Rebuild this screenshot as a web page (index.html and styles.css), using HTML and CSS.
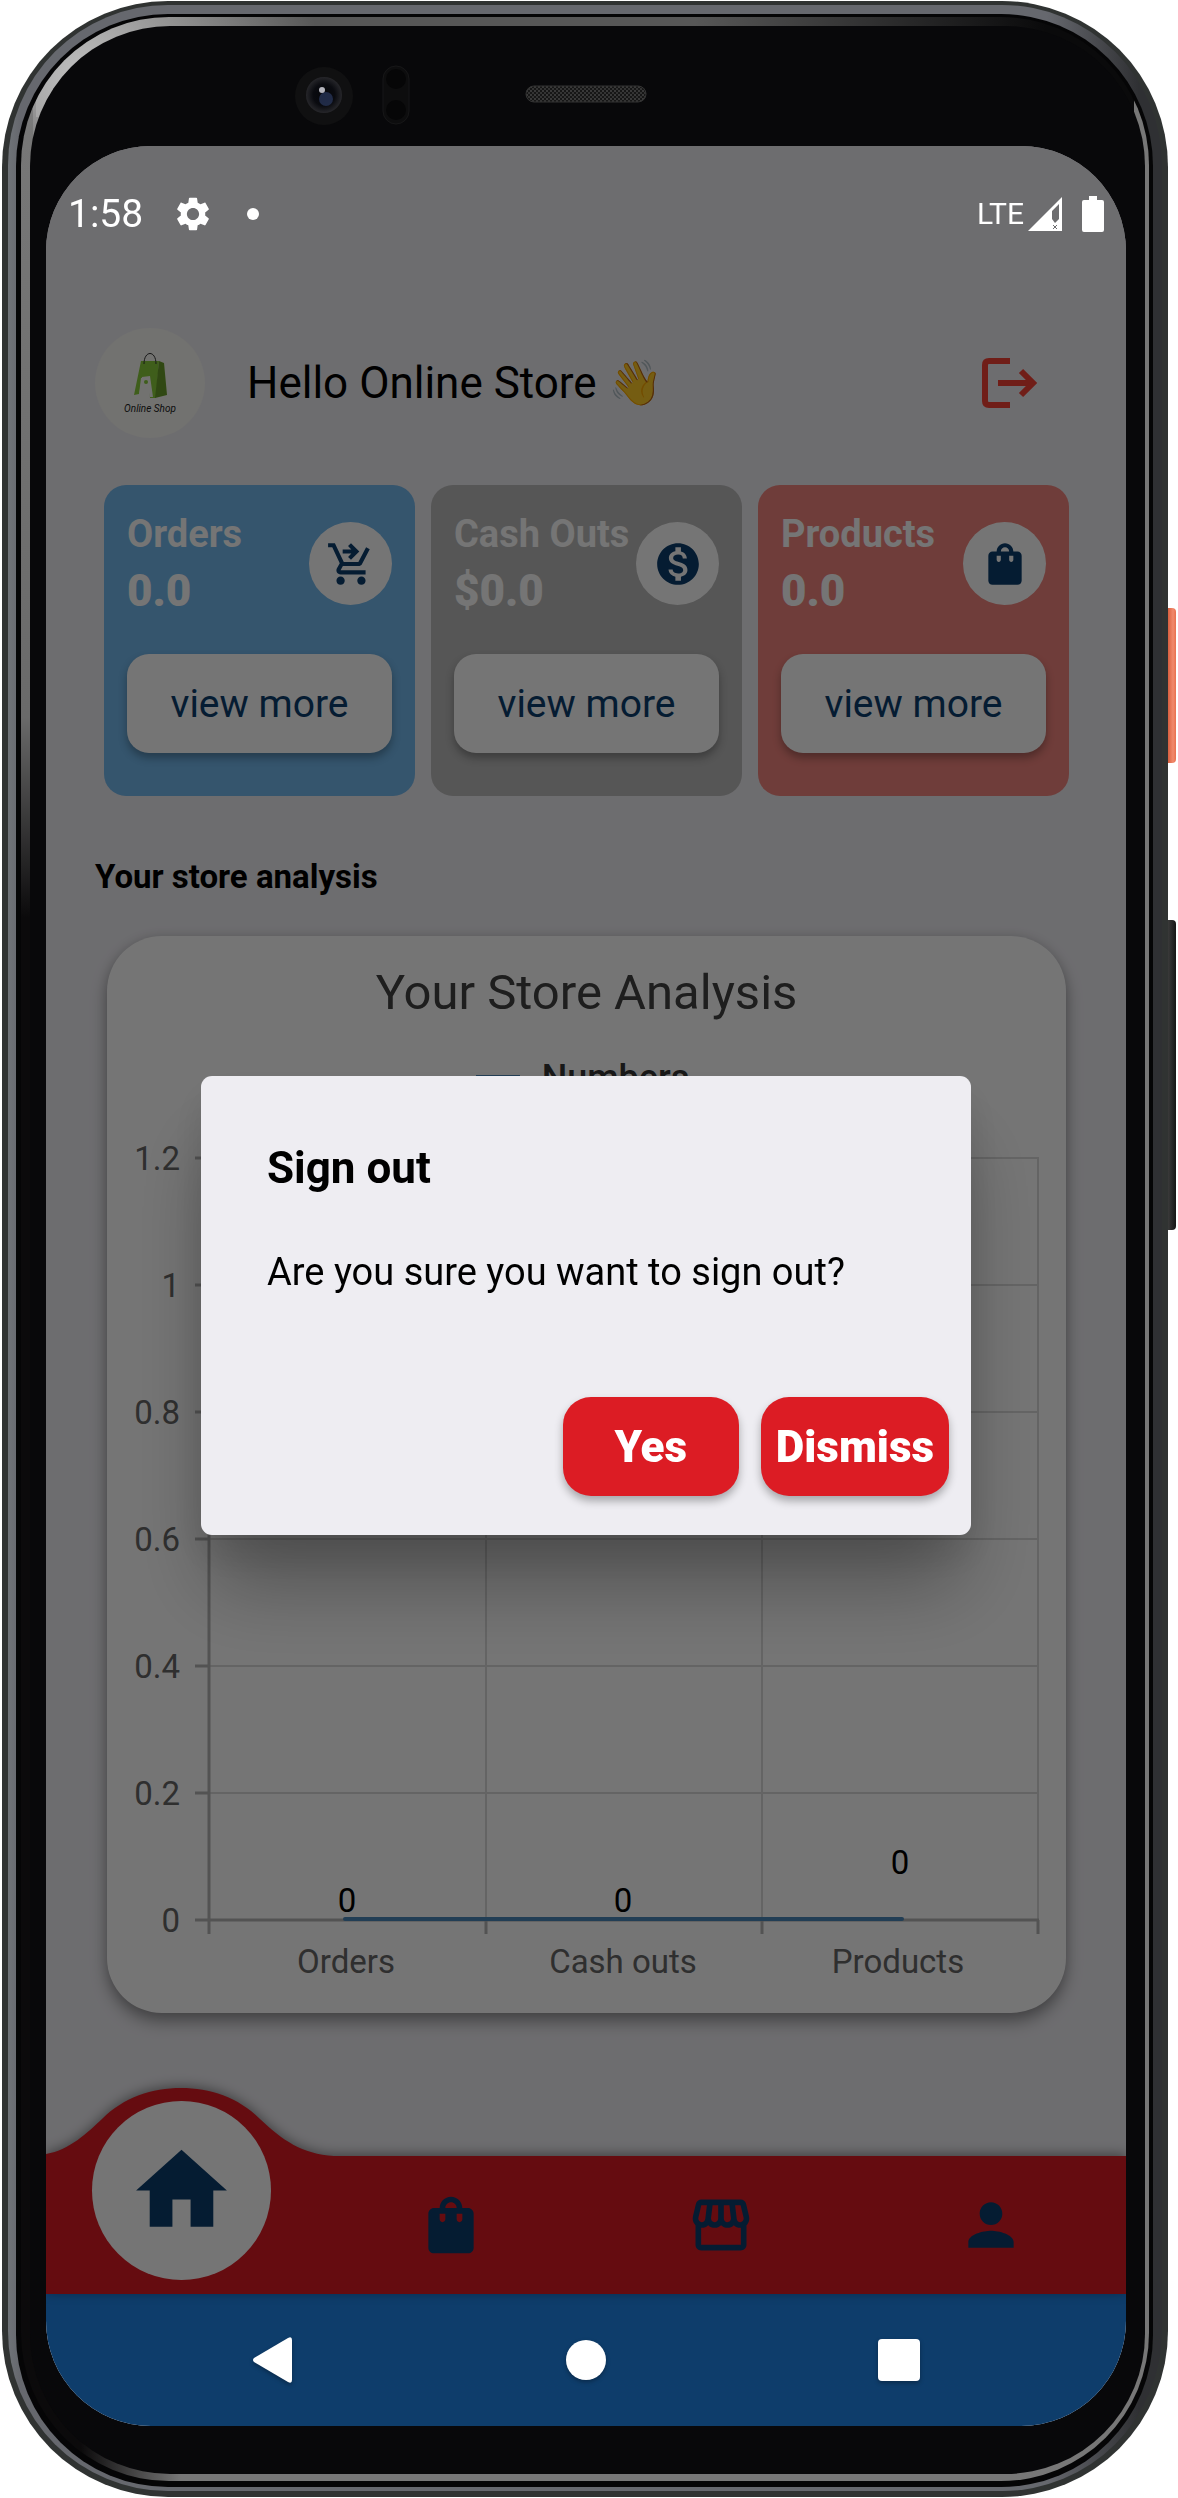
FILE: index.html
```html
<!DOCTYPE html>
<html lang="en">
<head>
<meta charset="utf-8">
<meta name="viewport" content="width=device-width, initial-scale=1">
<title>Online Store</title>
<link rel="stylesheet" href="styles.css">
</head>
<body>
<div class="phone">
  <span class="side-key side-key-power"></span>
  <span class="side-key side-key-volume"></span>
  <div class="rim"><div class="groove"><div class="bevel"><div class="face">
    <svg class="sensors" viewBox="0 0 360 70" aria-hidden="true">
      <defs>
        <radialGradient id="lens"><stop offset="0" stop-color="#05060a"/><stop offset=".6" stop-color="#0a0b10"/><stop offset="1" stop-color="#26262a"/></radialGradient>
        <pattern id="mesh" width="4" height="4" patternUnits="userSpaceOnUse"><rect width="4" height="4" fill="#161616"/><circle cx="1" cy="1" r="1" fill="#444"/><circle cx="3" cy="3" r="1" fill="#3c3c3c"/></pattern>
      </defs>
      <circle cx="34" cy="34" r="29" fill="#101011"/>
      <circle cx="34" cy="33" r="18" fill="url(#lens)"/>
      <circle cx="36" cy="37" r="7" fill="#2b3960" opacity=".7"/>
      <circle cx="32" cy="28" r="3" fill="#b5b5bd"/>
      <rect x="93" y="4" width="26" height="58" rx="13" fill="#0d0d0e" stroke="#171718"/>
      <circle cx="106" cy="17" r="10" fill="#060607"/>
      <circle cx="106" cy="48" r="10" fill="#060607"/>
      <rect x="236" y="24" width="120" height="16" rx="8" fill="url(#mesh)" stroke="#333"/>
    </svg>

    <div class="screen">
      <div class="app">
        <div class="status-bar">
          <span class="clock">1:58</span>
          <svg class="gear" viewBox="2 2 20 20" aria-hidden="true"><path fill="currentColor" d="M19.14 12.94c.04-.3.06-.61.06-.94 0-.32-.02-.64-.07-.94l2.03-1.58c.18-.14.23-.41.12-.61l-1.92-3.32c-.12-.22-.37-.29-.59-.22l-2.39.96c-.5-.38-1.03-.7-1.62-.94l-.36-2.54c-.04-.24-.24-.41-.48-.41h-3.84c-.24 0-.43.17-.47.41l-.36 2.54c-.59.24-1.13.57-1.62.94l-2.39-.96c-.22-.08-.47 0-.59.22L2.74 8.87c-.12.21-.08.47.12.61l2.03 1.58c-.05.3-.09.63-.09.94s.02.64.07.94l-2.03 1.58c-.18.14-.23.41-.12.61l1.92 3.32c.12.22.37.29.59.22l2.39-.96c.5.38 1.03.7 1.62.94l.36 2.54c.05.24.24.41.48.41h3.84c.24 0 .44-.17.47-.41l.36-2.54c.59-.24 1.13-.56 1.62-.94l2.39.96c.22.08.47 0 .59-.22l1.92-3.32c.12-.22.07-.47-.12-.61l-2.01-1.58zM12 15.6c-1.98 0-3.6-1.62-3.6-3.6s1.62-3.6 3.6-3.6 3.6 1.62 3.6 3.6-1.62 3.6-3.6 3.6z"/></svg>
          <span class="dot"></span>
          <span class="network">LTE</span>
          <svg class="signal" viewBox="0 0 34 34" aria-hidden="true"><path fill="currentColor" fill-rule="evenodd" d="M34 0V34H0ZM31 7L24 14V22L27 26L31 22Z"/><path d="M25 28l4 4m0-4l-4 4" stroke="#6d6d6f"/></svg>
          <svg class="battery" viewBox="0 0 22 36" aria-hidden="true"><path fill="currentColor" d="M7 0h8v4h5q2 0 2 2v28q0 2-2 2H2q-2 0-2-2V6q0-2 2-2h5z"/></svg>
        </div>

        <main class="page">
          <header class="greeting">
            <svg class="avatar" viewBox="0 0 110 110" role="img" aria-label="Online Shop logo">
              <circle cx="55" cy="55" r="55" fill="#f8f8f3"/>
              <path d="M46 33h18l-3 37h-6l-1-20h-8l-2 16-5 1z" fill="#8acd3c"/>
              <path d="M64 33l5 2 3 32-12 3z" fill="#6a9e2a"/>
              <path d="M47 49l8-1 3 21h-3l-2-8h-4l-1 6h-4z" fill="#f8f8f3"/>
              <circle cx="51" cy="54" r="2" fill="#8acd3c"/>
              <path d="M49 36c0-14 12-14 12 0" fill="none" stroke="#333" stroke-width="1"/>
              <text class="avatar-text" x="55" y="84" text-anchor="middle">Online Shop</text>
            </svg>
            <h1 class="hello">Hello Online Store <span class="wave">👋</span></h1>
            <button class="logout" type="button" aria-label="Sign out">
              <svg viewBox="0 0 56 50" aria-hidden="true"><path d="M28 3H7Q3 3 3 7V43Q3 47 7 47H28" fill="none" stroke="currentColor" stroke-width="6"/><path d="M16 25H51M39 13L51 25L39 37" fill="none" stroke="currentColor" stroke-width="6"/></svg>
            </button>
          </header>

          <section class="stats">
            <article class="stat stat-orders">
              <div class="stat-head">
                <div><h2 class="stat-name">Orders</h2><p class="stat-value">0.0</p></div>
                <span class="stat-icon"><svg viewBox="0 0 24 24" aria-hidden="true"><path fill="currentColor" d="M7 18c-1.1 0-1.99.9-1.99 2S5.9 22 7 22s2-.9 2-2-.9-2-2-2zm10 0c-1.1 0-1.99.9-1.99 2s.89 2 1.99 2 2-.9 2-2-.9-2-2-2zM8.1 13h7.45c.75 0 1.41-.41 1.75-1.03L21 4.96 19.25 4l-3.7 7H8.53L4.27 2H1v2h2l3.6 7.59-1.35 2.44C4.52 15.37 5.48 17 7 17h12v-2H7l1.1-2z"/><path fill="currentColor" d="M12 2l4 4-4 4-1.41-1.41L12.17 7H8V5h4.17l-1.59-1.59L12 2z"/></svg></span>
              </div>
              <button class="more" type="button">view more</button>
            </article>
            <article class="stat stat-cash">
              <div class="stat-head">
                <div><h2 class="stat-name">Cash Outs</h2><p class="stat-value">$0.0</p></div>
                <span class="stat-icon"><svg viewBox="0 0 24 24" aria-hidden="true"><path fill="currentColor" d="M12 2C6.48 2 2 6.48 2 12s4.48 10 10 10 10-4.48 10-10S17.52 2 12 2zm1.41 16.09V20h-2.67v-1.93c-1.71-.36-3.16-1.46-3.27-3.4h1.96c.1 1.05.82 1.87 2.65 1.87 1.96 0 2.4-.98 2.4-1.59 0-.83-.44-1.61-2.67-2.14-2.48-.6-4.18-1.62-4.18-3.67 0-1.72 1.39-2.84 3.11-3.21V4h2.67v1.95c1.86.45 2.79 1.86 2.85 3.39H14.3c-.05-1.11-.64-1.87-2.22-1.87-1.5 0-2.4.68-2.4 1.64 0 .84.65 1.39 2.67 1.91s4.18 1.39 4.18 3.91c-.01 1.83-1.38 2.83-3.12 3.16z"/></svg></span>
              </div>
              <button class="more" type="button">view more</button>
            </article>
            <article class="stat stat-products">
              <div class="stat-head">
                <div><h2 class="stat-name">Products</h2><p class="stat-value">0.0</p></div>
                <span class="stat-icon"><svg viewBox="0 0 24 24" aria-hidden="true"><path fill="currentColor" d="M18 6h-2c0-2.21-1.79-4-4-4S8 3.79 8 6H6c-1.1 0-2 .9-2 2v12c0 1.1.9 2 2 2h12c1.1 0 2-.9 2-2V8c0-1.1-.9-2-2-2zm-8 4c0 .55-.45 1-1 1s-1-.45-1-1V8h2v2zm2-6c1.1 0 2 .9 2 2h-4c0-1.1.9-2 2-2zm4 6c0 .55-.45 1-1 1s-1-.45-1-1V8h2v2z"/></svg></span>
              </div>
              <button class="more" type="button">view more</button>
            </article>
          </section>

          <h2 class="section-title">Your store analysis</h2>

          <section class="chart">
            <h3 class="chart-title">Your Store Analysis</h3>
            <p class="legend"><span class="legend-line"></span>Numbers</p>
            <svg class="plot" viewBox="0 0 959 868" role="img" aria-label="Orders 0, Cash outs 0, Products 0">
              <path class="grid-lines" d="M102 13H932M102 140H932M102 267H932M102 394H932M102 521H932M102 648H932M379 13V775M655 13V775M931 13V775"/>
              <path class="axis-lines" d="M102 13V789M88 775H932M88 13H102M88 140H102M88 267H102M88 394H102M88 521H102M88 648H102M379 775V789M655 775V789M931 775V789"/>
              <path class="series" d="M238 774H795"/>
              <g class="tick" text-anchor="end">
                <text x="73" y="25">1.2</text><text x="73" y="152">1</text><text x="73" y="279">0.8</text><text x="73" y="406">0.6</text><text x="73" y="533">0.4</text><text x="73" y="660">0.2</text><text x="73" y="787">0</text>
              </g>
              <g class="tick" text-anchor="middle">
                <text x="239" y="828">Orders</text><text x="516" y="828">Cash outs</text><text x="791" y="828">Products</text>
              </g>
              <g class="point" text-anchor="middle">
                <text x="240" y="767">0</text><text x="516" y="767">0</text><text x="793" y="729">0</text>
              </g>
            </svg>
          </section>
        </main>

        <nav class="tabs" aria-label="Main">
          <svg class="bump" viewBox="0 0 290 69" aria-hidden="true"><path fill="#dc1c24" d="M0 69V66C24 62 42 44 56 31C78 9 106 0 135 0S192 9 214 31C236 52 256 66 288 68V69Z"/></svg>
          <a class="tab tab-active" href="#home" aria-label="Home"><span class="tab-disc"><svg viewBox="0 0 24 24"><path fill="currentColor" d="M10 20v-6h4v6h5v-8h3L12 3 2 12h3v8z"/></svg></span></a>
          <a class="tab" href="#products" aria-label="Products"><svg viewBox="0 0 24 24"><path fill="currentColor" d="M18 6h-2c0-2.21-1.79-4-4-4S8 3.79 8 6H6c-1.1 0-2 .9-2 2v12c0 1.1.9 2 2 2h12c1.1 0 2-.9 2-2V8c0-1.1-.9-2-2-2zm-8 4c0 .55-.45 1-1 1s-1-.45-1-1V8h2v2zm2-6c1.1 0 2 .9 2 2h-4c0-1.1.9-2 2-2zm4 6c0 .55-.45 1-1 1s-1-.45-1-1V8h2v2z"/></svg></a>
          <a class="tab" href="#store" aria-label="Store"><svg viewBox="0 0 24 24"><path fill="currentColor" d="M21.9 8.89l-1.05-4.37c-.22-.9-1-1.52-1.91-1.52H5.05c-.9 0-1.69.63-1.9 1.52L2.1 8.89c-.24 1.02-.02 2.06.62 2.88.08.11.19.19.28.29V19c0 1.1.9 2 2 2h14c1.1 0 2-.9 2-2v-6.94c.09-.09.2-.18.28-.28.64-.82.87-1.87.62-2.89zm-2.99-3.9l1.05 4.37c.1.42.01.84-.25 1.17-.14.18-.44.47-.94.47-.61 0-1.14-.49-1.21-1.14L16.98 5l1.93-.01zM13 5h1.96l.54 4.52c.05.39-.07.78-.33 1.07-.22.26-.54.41-.95.41-.67 0-1.22-.59-1.22-1.31V5zM8.49 9.52L9.04 5H11v4.69c0 .72-.55 1.31-1.29 1.31-.34 0-.65-.15-.89-.41-.25-.29-.37-.68-.33-1.07zm-4.45-.16L5.05 5h1.97l-.58 4.86c-.08.65-.6 1.14-1.21 1.14-.49 0-.8-.29-.93-.47-.27-.32-.36-.75-.26-1.17zM5 19v-6.03c.08.01.15.03.23.03.87 0 1.66-.36 2.24-.95.6.6 1.4.95 2.31.95.87 0 1.65-.36 2.23-.93.59.57 1.39.93 2.29.93.84 0 1.64-.35 2.24-.95.58.59 1.37.95 2.24.95.08 0 .15-.02.23-.03V19H5z"/></svg></a>
          <a class="tab" href="#profile" aria-label="Profile"><svg viewBox="0 0 24 24"><path fill="currentColor" d="M12 12c2.21 0 4-1.79 4-4s-1.79-4-4-4-4 1.79-4 4 1.79 4 4 4zm0 2c-2.67 0-8 1.34-8 4v2h16v-2c0-2.66-5.33-4-8-4z"/></svg></a>
        </nav>

        <div class="scrim">
          <div class="dialog" role="alertdialog" aria-labelledby="dlg-title" aria-describedby="dlg-text">
            <h2 class="dialog-title" id="dlg-title">Sign out</h2>
            <p class="dialog-text" id="dlg-text">Are you sure you want to sign out?</p>
            <div class="dialog-actions">
              <button class="action" type="button">Yes</button>
              <button class="action" type="button">Dismiss</button>
            </div>
          </div>
        </div>
      </div>

      <div class="system-nav">
        <button type="button" aria-label="Back"><svg viewBox="0 0 46 46"><path fill="#fff" d="M42 3V43Q42 47 38 45L4 25Q2 23 4 21L38 1Q42 -1 42 3Z"/></svg></button>
        <button type="button" aria-label="Home"><svg viewBox="0 0 46 46"><circle cx="23" cy="23" r="20" fill="#fff"/></svg></button>
        <button type="button" aria-label="Recents"><svg viewBox="0 0 46 46"><rect x="2" y="2" width="42" height="42" rx="4" fill="#fff"/></svg></button>
      </div>
    </div>
  </div></div></div></div>
</div>
</body>
</html>
```
FILE: styles.css
```css
* { box-sizing: border-box; }
body { margin: 0; padding: 1px 10px 2px 2px; background: #fff; font-family: Roboto, "Liberation Sans", sans-serif; color: #000; }
h1, h2, h3, p { margin: 0; }
button { border: 0; padding: 0; background: none; font: inherit; color: inherit; }
svg { display: block; }

/* Handset: nested shells from the outer case to the glass */
.phone { position: relative; padding: 4px 6px 6px; border-radius: 166px; background: #303332; }
.rim { padding: 9px 9px 4px 8px; border-radius: 160px; background: linear-gradient(90deg, #6f7378, #66686e 12px, #66686e 90%, #2f3033 98%); }
.groove { padding: 3px 4px 6px 5px; border-radius: 152px; background: #050506; }
.bevel { padding: 9px 4px 7px 9px; border-radius: 148px; background:
  linear-gradient(#7770, #777 120px, #6a6a6a 700px, #0b0a0b 900px) 0 0 / 12px calc(100% - 150px) no-repeat,
  radial-gradient(circle at 60px 60px, #c0c0c0, transparent 240px),
  linear-gradient(90deg, #575757 60%, #0a0a0b 92%) top / calc(100% - 30px) 100px no-repeat,
  linear-gradient(90deg, #0b0a0b 60px, #777 160px); }
.face { padding: 36px 19px 48px 16px; border-radius: 140px; background: #08080a; }
.sensors { width: 360px; height: 70px; margin-left: 244px; }
.screen { margin-top: 14px; overflow: hidden; border-radius: 105px; background: #eeedf2; }
.side-key { position: absolute; left: 100%; width: 8px; border-radius: 0 4px 4px 0; }
.side-key-power { top: 607px; height: 155px; background: linear-gradient(90deg, #d9603f, #f18a6c 5px, #e8704f); }
.side-key-volume { top: 919px; height: 310px; background: linear-gradient(90deg, #3a3a3a, #161616); }

.app { position: relative; }
.status-bar { position: relative; z-index: 2; display: flex; align-items: center; height: 171px; padding: 0 22px 35px 22px; color: #fff; }
.clock { width: 108px; font-size: 39px; line-height: 46px; }
.gear { width: 34px; height: 36px; }
.dot { width: 12px; height: 12px; margin-left: 37px; border-radius: 50%; background: #fff; }
.network { margin-left: auto; font-size: 30px; line-height: 36px; }
.signal { width: 34px; height: 34px; margin-left: 4px; }
.battery { width: 22px; height: 36px; margin-left: 20px; }

.page { padding: 11px 57px 143px 58px; }
.greeting { display: flex; align-items: center; margin: 0 31px 47px -9px; }
.avatar { width: 110px; height: 110px; }
.avatar-text { font: italic 400 10px Roboto, "Liberation Sans", sans-serif; fill: #222; }
.hello { flex: 1; margin-left: 42px; font-size: 44px; font-weight: 400; line-height: 52px; }
.logout { color: #f44336; }
.logout svg { width: 56px; height: 50px; }

.stats { display: grid; grid-template-columns: repeat(3, 1fr); gap: 16px; }
.stat { padding: 26px 23px 43px; border-radius: 22px; color: #fff; }
.stat-orders { background: #73b9ed; }
.stat-cash { background: #bbb; }
.stat-products { background: #f2857e; }
.stat-head { display: flex; justify-content: space-between; align-items: flex-start; margin-bottom: 37px; }
.stat-head > div { flex: 1; width: 0; white-space: nowrap; }
.stat-name { margin-bottom: 8px; font-size: 38px; font-weight: 700; line-height: 46px; }
.stat-value { font-size: 44px; font-weight: 900; line-height: 52px; }
.stat-icon { display: grid; place-items: center; width: 83px; height: 83px; margin-top: 11px; border-radius: 50%; background: #fff; color: #0c3e6e; }
.stat-icon svg { width: 50px; height: 50px; }
.more { width: 100%; height: 99px; border-radius: 22px; background: #fff; color: #0c3e6e; font-size: 39px; box-shadow: 0 5px 8px rgba(0, 0, 0, .3); }

.section-title { margin: 61px 0 39px -9px; font-size: 33px; font-weight: 700; line-height: 40px; }
.chart { margin: 0 3px; border-radius: 55px; background: #fff; box-shadow: 0 9px 16px rgba(0, 0, 0, .35), 0 0 12px rgba(0, 0, 0, .1); }
.chart-title { padding-top: 28px; text-align: center; font-size: 49px; font-weight: 400; line-height: 58px; color: #424242; }
.legend { display: flex; align-items: center; justify-content: center; gap: 22px; margin-top: 33px; padding-right: 8px; font-size: 36px; font-weight: 500; line-height: 46px; color: #353535; }
.legend-line { width: 44px; height: 6px; background: #4b87b9; }
.plot { width: 100%; margin-top: 44px; }
.grid-lines { fill: none; stroke: #dbdbdb; stroke-width: 2; }
.axis-lines { fill: none; stroke: #b5b5b5; stroke-width: 3; }
.series { stroke: #4b87b9; stroke-width: 4; stroke-linecap: round; }
.tick { font-size: 33px; fill: #676767; }
.point { font-size: 33px; fill: #000; }

.tabs { position: relative; display: grid; grid-template-columns: repeat(4, 1fr); height: 138px; background: #dc1c24; filter: drop-shadow(0 -2px 6px rgba(0, 0, 0, .4)); }
.bump { position: absolute; left: 0; bottom: 100%; width: 290px; height: 69px; margin-bottom: -1px; }
.tab { position: relative; display: grid; place-items: center; color: #0c3e6e; }
.tab svg { width: 68px; height: 68px; }
.tab-disc { position: absolute; bottom: 14px; display: grid; place-items: center; width: 179px; height: 179px; border-radius: 50%; background: #fff; }
.tab .tab-disc svg { width: 109px; height: 109px; }

/* Dimmed layer with the confirmation dialog */
.scrim { position: absolute; inset: 0; display: flex; align-items: center; justify-content: center; padding: 171px 155px 0; background: rgba(0, 0, 0, .54); }
.dialog { flex: 1; padding: 66px 22px 39px 66px; border-radius: 11px; background: #eeedf2; box-shadow: 0 60px 80px -10px rgba(0, 0, 0, .3), 0 20px 40px rgba(0, 0, 0, .1); }
.dialog-title { font-size: 44px; font-weight: 700; line-height: 52px; }
.dialog-text { margin-top: 55px; font-size: 38px; line-height: 46px; }
.dialog-actions { display: flex; justify-content: flex-end; gap: 22px; margin-top: 102px; }
.action { min-width: 176px; height: 99px; padding: 0 15px; border-radius: 28px; background: #dc1c24; color: #fff; font-size: 44px; font-weight: 900; box-shadow: 0 5px 8px rgba(0, 0, 0, .3); }

.system-nav { display: flex; justify-content: space-around; align-items: center; height: 132px; padding: 0 70px; background: #0e3d6b; }
.system-nav svg { width: 46px; height: 46px; filter: drop-shadow(0 2px 2px rgba(0, 0, 0, .3)); }
```
